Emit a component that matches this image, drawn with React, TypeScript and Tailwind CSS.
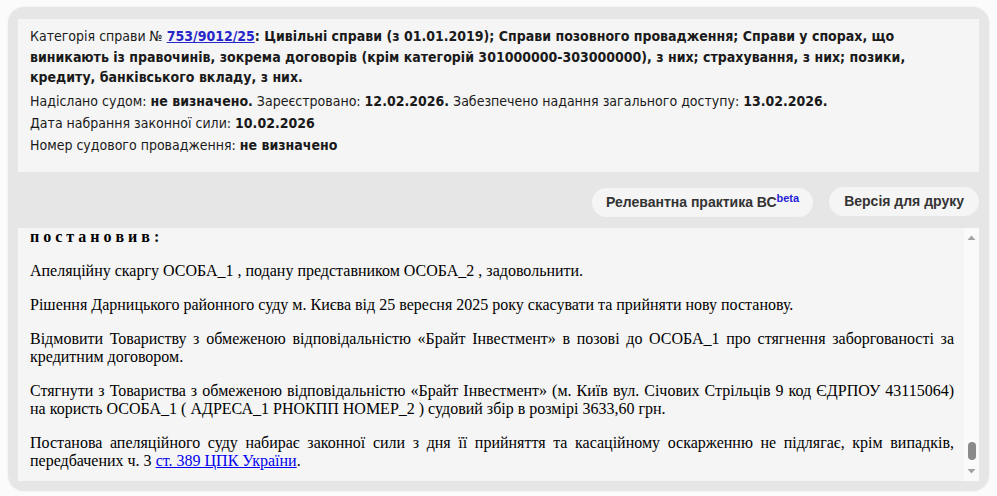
import { useLayoutEffect, useRef } from "react";

const earlier = [
  "Колегія суддів судової палати з розгляду цивільних справ Київського апеляційного суду, розглянувши в порядку спрощеного позовного провадження без повідомлення учасників справи цивільну справу за апеляційною скаргою ОСОБА_1 , поданою представником ОСОБА_2 , на рішення Дарницького районного суду м. Києва від 25 вересня 2025 року у справі за позовом Товариства з обмеженою відповідальністю «Брайт Інвестмент» до ОСОБА_1 про стягнення заборгованості за кредитним договором,",
  "В червні 2025 року позивач звернувся до суду з позовом, в якому просив стягнути з відповідача заборгованість за кредитним договором, посилаючись на те, що первісний кредитор відступив право вимоги за договором факторингу, а відповідач свої зобов'язання щодо повернення кредиту та сплати процентів не виконав.",
  "Рішенням Дарницького районного суду м. Києва від 25 вересня 2025 року позов задоволено. Стягнуто з відповідача на користь позивача заборгованість за кредитним договором та судові витрати.",
  "Не погоджуючись з таким рішенням, представник відповідача подав апеляційну скаргу, в якій, посилаючись на неповне з'ясування судом обставин, що мають значення для справи, та порушення норм процесуального права, просить рішення суду скасувати та ухвалити нове, яким у задоволенні позову відмовити.",
  "В обґрунтування доводів апеляційної скарги зазначає, що позивачем не надано належних та допустимих доказів переходу до нього права вимоги за кредитним договором, а також доказів перерахування коштів на рахунок відповідача.",
  "Відзиву на апеляційну скаргу до суду не надходило, що відповідно до частини третьої статті 360 ЦПК України не перешкоджає перегляду рішення суду першої інстанції.",
  "Заслухавши доповідь судді, перевіривши матеріали справи, законність та обґрунтованість рішення суду першої інстанції в межах доводів апеляційної скарги, колегія суддів дійшла висновку, що апеляційна скарга підлягає задоволенню з таких підстав.",
  "Відповідно до статті 263 ЦПК України судове рішення повинно ґрунтуватися на засадах верховенства права, бути законним і обґрунтованим. Законним є рішення, ухвалене судом відповідно до норм матеріального права із дотриманням норм процесуального права.",
  "Згідно зі статтею 12 ЦПК України кожна сторона повинна довести ті обставини, які мають значення для справи і на які вона посилається як на підставу своїх вимог або заперечень, крім випадків, встановлених цим Кодексом.",
  "Відповідно до статті 81 ЦПК України докази подаються сторонами та іншими учасниками справи. Доказування не може ґрунтуватися на припущеннях.",
  "Згідно з частиною першою статті 1054 ЦК України за кредитним договором банк або інша фінансова установа зобов'язується надати грошові кошти позичальникові у розмірі та на умовах, встановлених договором, а позичальник зобов'язується повернути кредит та сплатити проценти.",
  "Відповідно до статті 512 ЦК України кредитор у зобов'язанні може бути замінений іншою особою внаслідок передання ним своїх прав іншій особі за правочином (відступлення права вимоги).",
  "Статтею 514 ЦК України передбачено, що до нового кредитора переходять права первісного кредитора у зобов'язанні в обсязі і на умовах, що існували на момент переходу цих прав, якщо інше не встановлено договором або законом.",
  "Матеріали справи не містять належних доказів того, що право вимоги до відповідача за кредитним договором перейшло до позивача, оскільки витяг з реєстру боржників не підписаний уповноваженими особами та не містить відомостей про оплату відступленого права.",
  "Крім того, позивачем не надано первинних бухгалтерських документів, які б підтверджували перерахування кредитних коштів на рахунок відповідача, а розрахунок заборгованості, складений самим позивачем, не є належним доказом наявності боргу.",
  "За таких обставин суд першої інстанції дійшов помилкового висновку про доведеність позовних вимог, у зв'язку з чим рішення суду підлягає скасуванню з ухваленням нового рішення про відмову в задоволенні позову.",
  "Відповідно до статті 141 ЦПК України у разі скасування рішення та ухвалення нового рішення суд апеляційної інстанції змінює розподіл судових витрат.",
  "Керуючись статтями 367, 368, 374, 376, 381 - 384 ЦПК України, колегія суддів",
];

function ScrollBar() {
  return (
    <div className="w-[15px] shrink-0 bg-[#fafafa] flex flex-col items-center">
      <svg width="15" height="17" viewBox="0 0 15 17" className="shrink-0">
        <path d="M3.5 12 L7.5 7.5 L11.5 12 Z" fill="#a3a3a3" />
      </svg>
      <div className="flex-1 flex flex-col justify-end pb-[4px]">
        <div className="w-[8px] h-[18px] rounded-full bg-[#8a8a8a]" />
      </div>
      <svg width="15" height="17" viewBox="0 0 15 17" className="shrink-0">
        <path d="M3.5 5 L7.5 9.5 L11.5 5 Z" fill="#a3a3a3" />
      </svg>
    </div>
  );
}

export default function App() {
  const scrollRef = useRef<HTMLDivElement>(null);

  useLayoutEffect(() => {
    const el = scrollRef.current;
    if (el) el.scrollTop = el.scrollHeight;
  }, []);

  return (
    <div className="min-h-screen bg-[#fbfbfb] px-2 pt-[7px] pb-[6px]">
      <div className="rounded-[16px] bg-[#e6e6e6] p-[10px] pt-[12px] shadow-[0_0_3px_rgba(0,0,0,0.06)]">
        {/* Header */}
        <div
          className="bg-[#f5f5f5] pl-3 pr-4 pt-[7px] pb-4 text-[14px] text-[#1a1a1a]"
          style={{ fontFamily: '"DejaVu Sans Condensed", "DejaVu Sans", sans-serif' }}
        >
          <div className="leading-[20.5px]">
            Категорія справи №{" "}
            <a href="#" className="font-bold text-[#2626c9] underline">753/9012/25</a>
            <b>
              : Цивільні справи (з 01.01.2019); Справи позовного провадження; Справи у спорах, що виникають із
              правочинів, зокрема договорів (крім категорій 301000000-303000000), з них; страхування, з них;
              позики, кредиту, банківського вкладу, з них.
            </b>
          </div>
          <div className="mt-[2px] leading-[22px]">
            Надіслано судом: <b>не визначено.</b> Зареєстровано: <b>12.02.2026.</b> Забезпечено надання
            загального доступу: <b>13.02.2026.</b>
          </div>
          <div className="leading-[22px]">
            Дата набрання законної сили: <b>10.02.2026</b>
          </div>
          <div className="leading-[22px]">
            Номер судового провадження: <b>не визначено</b>
          </div>
        </div>

        {/* Buttons */}
        <div
          className="h-[56px] flex justify-end items-start gap-4 pt-[15px] text-[14px] font-bold text-[#333]"
          style={{ fontFamily: '"Liberation Sans", Arial, sans-serif' }}
        >
          <button className="mt-[1px] h-[29px] rounded-full bg-[#f5f5f5] px-[14px] leading-none">
            Релевантна практика ВС<sup className="text-[#1f1fd6] text-[11px]">beta</sup>
          </button>
          <button className="h-[29px] rounded-full bg-[#f5f5f5] px-[15px] leading-none">Версія для друку</button>
        </div>

        {/* Document text */}
        <div className="h-[253px] flex bg-[#f5f5f5]">
          <div
            ref={scrollRef}
            className="flex-1 min-w-0 overflow-y-scroll [scrollbar-width:none] pl-3 pr-[10px] text-[16px] leading-[18px] text-black text-justify"
            style={{ fontFamily: '"Liberation Serif", "Times New Roman", serif' }}
          >
            {earlier.map((t, i) => (
              <p key={i} className="my-4">{t}</p>
            ))}
            <p className="my-4 font-bold">п о с т а н о в и в :</p>
            <p className="my-4">Апеляційну скаргу ОСОБА_1 , подану представником ОСОБА_2 , задовольнити.</p>
            <p className="my-4">
              Рішення Дарницького районного суду м. Києва від 25 вересня 2025 року скасувати та прийняти нову постанову.
            </p>
            <p className="my-4">
              Відмовити Товариству з обмеженою відповідальністю «Брайт Інвестмент» в позові до ОСОБА_1 про стягнення
              заборгованості за кредитним договором.
            </p>
            <p className="my-4">
              Стягнути з Товариства з обмеженою відповідальністю «Брайт Інвестмент» (м. Київ вул. Січових Стрільців 9 код
              ЄДРПОУ 43115064) на користь ОСОБА_1 ( АДРЕСА_1 РНОКПП НОМЕР_2 ) судовий збір в розмірі 3633,60 грн.
            </p>
            <p className="mt-4 mb-[11px]">
              Постанова апеляційного суду набирає законної сили з дня її прийняття та касаційному оскарженню не підлягає,
              крім випадків, передбачених ч. 3{" "}
              <a href="#" className="text-[#0000ee] underline">ст. 389 ЦПК України</a>.
            </p>
          </div>
          <ScrollBar />
        </div>
      </div>
    </div>
  );
}
